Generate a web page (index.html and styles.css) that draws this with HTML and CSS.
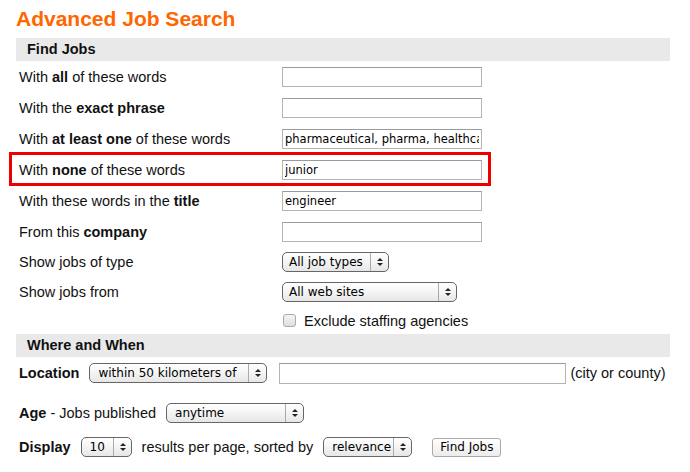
FILE: index.html
```html
<!DOCTYPE html>
<html lang="en">
<head>
<meta charset="UTF-8">
<meta name="viewport" content="width=device-width, initial-scale=1.0">
<title>Advanced Job Search</title>
<link rel="stylesheet" href="styles.css">
</head>
<body>

<div class="page">
  <h1>Advanced Job Search</h1>

  <div class="section-head">Find Jobs</div>

  <div class="row">
    <label>With <b>all</b> of these words</label>
    <input class="text" type="text" value="">
  </div>
  <div class="row">
    <label>With the <b>exact phrase</b></label>
    <input class="text" type="text" value="">
  </div>
  <div class="row">
    <label>With <b>at least one</b> of these words</label>
    <input class="text" type="text" value="pharmaceutical, pharma, healthcare">
  </div>
  <div class="row highlight">
    <label>With <b>none</b> of these words</label>
    <input class="text" type="text" value="junior">
  </div>
  <div class="row">
    <label>With these words in the <b>title</b></label>
    <input class="text" type="text" value="engineer">
  </div>
  <div class="row">
    <label>From this <b>company</b></label>
    <input class="text" type="text" value="">
  </div>
  <div class="row short">
    <label>Show jobs of type</label>
    <div class="select w-type"><span class="val">All job types</span><span class="arrows"></span></div>
  </div>
  <div class="row short">
    <label>Show jobs from</label>
    <div class="select w-sites"><span class="val">All web sites</span><span class="arrows"></span></div>
  </div>
  <div class="row check-row">
    <span></span>
    <div class="check"><span class="box"></span>Exclude staffing agencies</div>
  </div>

  <div class="section-head">Where and When</div>

  <div class="line loc">
    <b>Location</b>
    <div class="select w-radius"><span class="val">within 50 kilometers of</span><span class="arrows"></span></div>
    <input class="text w-loc" type="text" value="">
    <span>(city or county)</span>
  </div>
  <div class="line age">
    <span><b>Age</b> - Jobs published</span>
    <div class="select w-age"><span class="val">anytime</span><span class="arrows"></span></div>
  </div>
  <div class="line disp">
    <b>Display</b>
    <div class="select w-num"><span class="val">10</span><span class="arrows"></span></div>
    <span>results per page, sorted by</span>
    <div class="select w-sort"><span class="val">relevance</span><span class="arrows"></span></div>
    <button type="button" class="btn">Find Jobs</button>
  </div>
</div>

</body>
</html>
```

FILE: styles.css
```css
body {
  margin: 0;
  padding: 0;
  background-color: #fff;
  font-family: "Liberation Sans", Arial, sans-serif;
  font-size: 14.5px;
  color: #111;
}

.page {
  width: 654px;
  padding: 0 0 0 16px;
}

h1 {
  margin: 0;
  padding-top: 7px;
  height: 31px;
  font-size: 21px;
  line-height: 24px;
  color: #ff6600;
}

.section-head {
  height: 23px;
  line-height: 23px;
  background-color: #e9e9e9;
  padding-left: 11px;
  font-weight: bold;
}

.row {
  position: relative;
  display: grid;
  grid-template-columns: 263px 1fr;
  align-items: center;
  height: 31px;
  padding-left: 3px;
}

.row.short {
  height: 30px;
}

/* red box drawn over the "none" row */
.highlight::after {
  content: "";
  position: absolute;
  left: -7px;
  top: -2px;
  width: 476px;
  height: 28px;
  border: 3px solid #ee0000;
}

.text {
  box-sizing: border-box;
  width: 200px;
  height: 20px;
  margin: 0;
  padding: 0 2px;
  border: 1px solid #b4b4b4;
  border-top-color: #9a9a9a;
  font-family: "DejaVu Sans", sans-serif;
  font-size: 11.5px;
  color: #000;
  outline: none;
}

.select {
  box-sizing: border-box;
  display: flex;
  align-items: center;
  height: 20px;
  border: 1px solid #666;
  border-radius: 5px;
  background: linear-gradient(#ffffff, #f4f4f4 50%, #e6e6e6);
  font-family: "DejaVu Sans", sans-serif;
  font-size: 12px;
  color: #000;
}

.select .val {
  flex: 1;
  padding-left: 6px;
  white-space: nowrap;
  overflow: hidden;
}

.select .arrows {
  position: relative;
  width: 17px;
  height: 18px;
  border-left: 1px solid #aaa;
}

.select .arrows::before,
.select .arrows::after {
  content: "";
  position: absolute;
  left: 6px;
  border-left: 3px solid transparent;
  border-right: 3px solid transparent;
}

.select .arrows::before {
  top: 5px;
  border-bottom: 3px solid #222;
}

.select .arrows::after {
  top: 10px;
  border-top: 3px solid #222;
}

.w-type { width: 107px; }
.w-sites { width: 175px; }
.w-radius { width: 178px; }
.w-age { width: 138px; }
.w-num { width: 51px; }
.w-sort { width: 89px; }

.w-radius .val,
.w-age .val,
.w-num .val,
.w-sort .val {
  padding-left: 8px;
}

.check-row {
  height: 27px;
  grid-template-columns: 264px 1fr;
}

.check {
  display: flex;
  align-items: center;
}

.check .box {
  box-sizing: border-box;
  width: 13px;
  height: 13px;
  margin-right: 8px;
  border: 1px solid #aaa;
  border-radius: 3px;
  background: linear-gradient(#f4f4f4, #dedede);
}

.line {
  display: flex;
  align-items: center;
  height: 30px;
  padding-left: 3px;
  white-space: nowrap;
}

.line > * {
  margin-right: 10px;
  flex-shrink: 0;
}

.loc {
  margin-top: 1px;
}

.loc .w-radius {
  margin-right: 12px;
}

.w-loc {
  width: 287px;
  height: 21px;
  margin-right: 4px;
}

.age {
  margin-top: 10px;
}

.disp {
  margin-top: 4px;
}

.disp .w-sort {
  margin-right: 20px;
}

.btn {
  height: 19px;
  padding: 0 7px;
  border: 1px solid #aaa;
  border-radius: 3px;
  background: linear-gradient(#ffffff, #ececec);
  font-family: "DejaVu Sans", sans-serif;
  font-size: 12px;
  color: #000;
}
```
